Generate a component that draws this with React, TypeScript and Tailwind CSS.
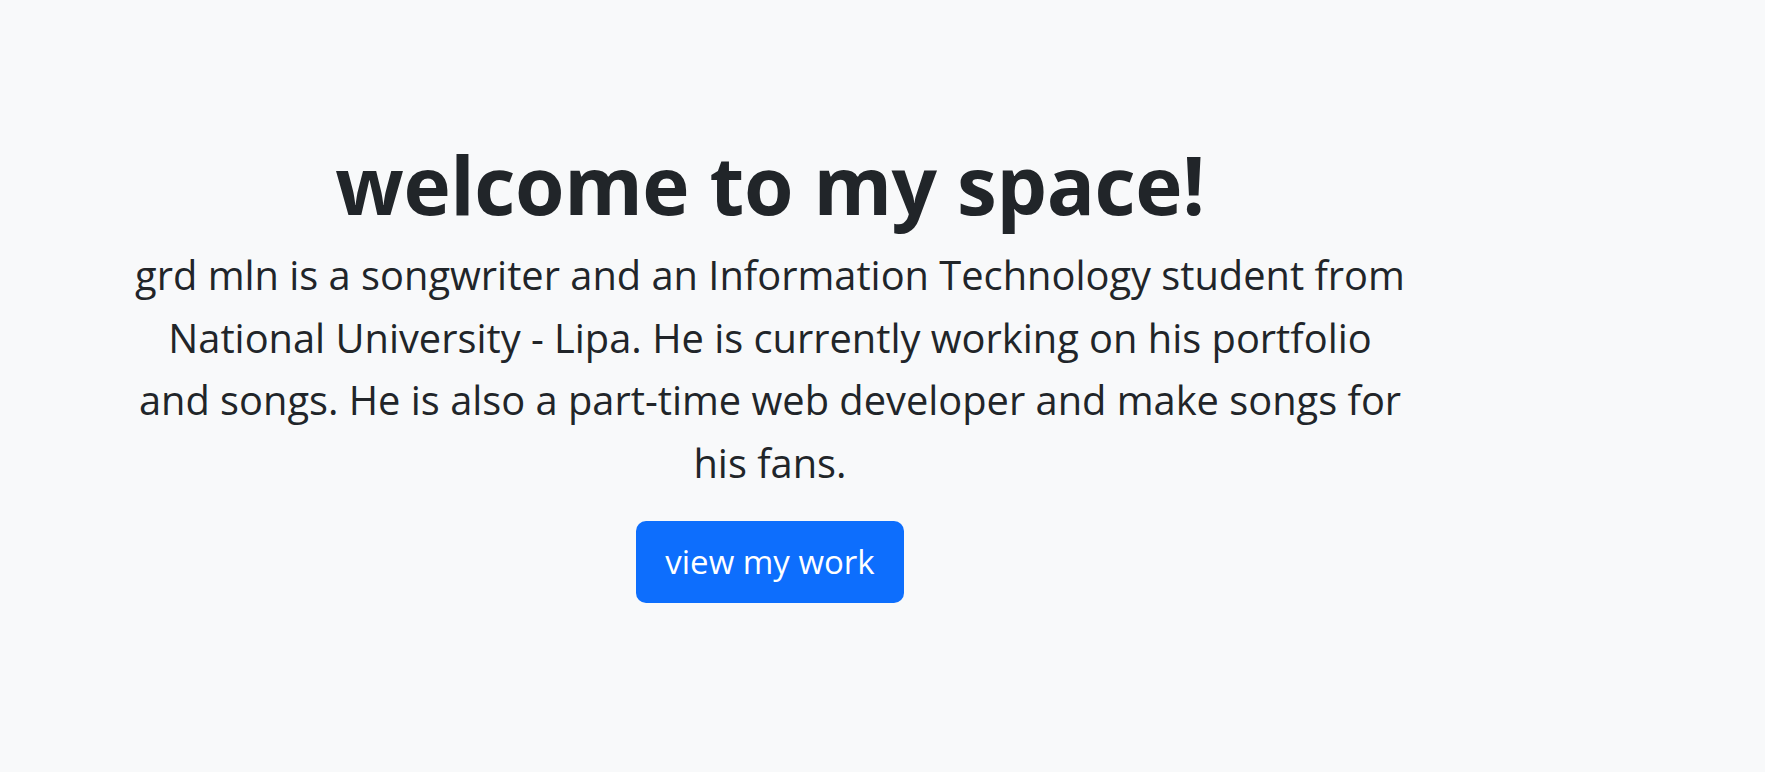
import React from "react";

export default function App() {
  return (
    <div
      className="min-h-screen w-full bg-[#f8f9fa] text-[#212529]"
      style={{ fontFamily: '"Open Sans", "Noto Sans", sans-serif' }}
    >
      <div className="ml-[120px] w-[1300px] pt-[136px] text-center">
        <h1 className="text-[80px] font-bold leading-[96px] tracking-[-0.4px]">welcome to my space!</h1>
        <p className="mt-[12px] text-[39.8px] leading-[62.5px]">
          grd mln is a songwriter and an Information Technology student from
          <br />
          National University - Lipa. He is currently working on his portfolio
          <br />
          and songs. He is also a part-time web developer and make songs for
          <br />
          his fans.
        </p>
        <button className="mt-[27px] h-[82px] w-[268px] rounded-[10px] bg-[#0d6efd] text-[33px] text-white">
          view my work
        </button>
      </div>
    </div>
  );
}
